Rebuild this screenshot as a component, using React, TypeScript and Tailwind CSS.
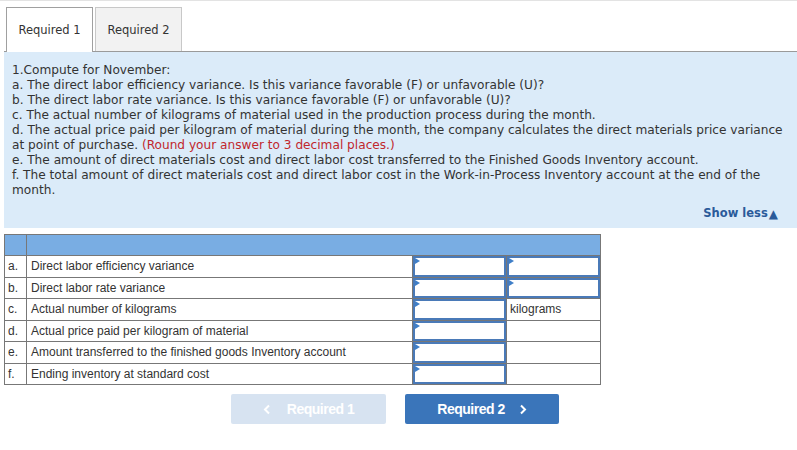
import React from "react";

const rows = [
  { k: "a.", label: "Direct labor efficiency variance", unit: "input" },
  { k: "b.", label: "Direct labor rate variance", unit: "input" },
  { k: "c.", label: "Actual number of kilograms", unit: "kilograms" },
  { k: "d.", label: "Actual price paid per kilogram of material", unit: "" },
  { k: "e.", label: "Amount transferred to the finished goods Inventory account", unit: "" },
  { k: "f.", label: "Ending inventory at standard cost", unit: "" },
];

function InputCell() {
  return (
    <div className="relative h-full border-2 border-[#4a7ab8]">
      {/* little entry marker */}
      <span className="absolute left-0 top-0 w-0 h-0 border-y-[3px] border-y-transparent border-l-[5px] border-l-[#3f7fc8]" />
    </div>
  );
}

export default function App() {
  return (
    <div className="w-[797px] h-[450px] bg-white border-t border-[#e3e3e3] overflow-hidden font-['DejaVu_Sans',Verdana,sans-serif] text-[#333]">
      {/* Tabs */}
      <div className="pl-[4px] pt-[6px]">
        <div className="flex gap-[2px] pl-[2px] border-b border-[#9a9a9a]">
          <div className="w-[87px] h-[45px] -mb-px bg-white border border-b-0 border-[#a0a0a0] flex items-center justify-center pt-[2px] text-[11.5px] text-[#333]">
            Required 1
          </div>
          <div className="w-[87px] h-[44px] bg-[#f2f2f2] border border-b-0 border-[#c8c8c8] flex items-center justify-center pt-[2px] text-[11.5px] text-[#333]">
            Required 2
          </div>
        </div>

        {/* Question panel */}
        <div className="bg-[#dbebf9] h-[176px] pl-[8px] pr-[6px] pt-[11px] flex flex-col">
          <div className="text-[12.15px] leading-[15px] text-[#333]">
            <div>1.Compute for November:</div>
            <div>a. The direct labor efficiency variance. Is this variance favorable (F) or unfavorable (U)?</div>
            <div>b. The direct labor rate variance. Is this variance favorable (F) or unfavorable (U)?</div>
            <div>c. The actual number of kilograms of material used in the production process during the month.</div>
            <div>
              d. The actual price paid per kilogram of material during the month, the company calculates the direct materials price variance at point of purchase.{" "}
              <span className="text-[#c1272d]">(Round your answer to 3 decimal places.)</span>
            </div>
            <div>e. The amount of direct materials cost and direct labor cost transferred to the Finished Goods Inventory account.</div>
            <div>f. The total amount of direct materials cost and direct labor cost in the Work-in-Process Inventory account at the end of the month.</div>
          </div>
          <div className="flex justify-end pr-[13px] mt-[7px]">
            <span className="text-[11.5px] font-bold text-[#2a5a9a] flex items-center gap-[1px]">
              Show less
              <span className="text-[12px] leading-none">▲</span>
            </span>
          </div>
        </div>
      </div>

      {/* Answer table */}
      <table className="ml-[4px] mt-[6px] w-[597px] border-collapse font-['Liberation_Sans',Arial,sans-serif] text-[12px] text-[#333]">
        <colgroup>
          <col className="w-[22px]" />
          <col className="w-[386px]" />
          <col className="w-[94px]" />
          <col className="w-[94px]" />
        </colgroup>
        <thead>
          <tr className="h-[21px] bg-[#79ade3]">
            <th className="border border-[#777]" />
            <th className="border border-[#777]" colSpan={3} />
          </tr>
        </thead>
        <tbody>
          {rows.map((r, i) => {
            const h = i % 2 === 0 ? "h-[21px] leading-[21px]" : "h-[20px] leading-[20px]";
            return (
              <tr key={r.k}>
                <td className={"border border-[#777] pl-[3px] p-0 align-middle " + h}>{r.k}</td>
                <td className={"border border-[#777] pl-[4px] p-0 align-middle " + h}>{r.label}</td>
                <td className="border border-[#777] p-0 align-top">
                  <div className={h}>
                    <InputCell />
                  </div>
                </td>
                {r.unit === "input" ? (
                  <td className="border border-[#777] p-0 align-top">
                    <div className={h}>
                      <InputCell />
                    </div>
                  </td>
                ) : (
                  <td className={"border border-[#777] pl-[3px] p-0 align-middle " + h}>{r.unit}</td>
                )}
              </tr>
            );
          })}
        </tbody>
      </table>

      {/* Navigation buttons */}
      <div className="flex justify-center gap-[19px] mt-[9px] pr-[7px] font-['Liberation_Sans',Arial,sans-serif]">
        <button className="w-[155px] h-[30px] rounded-[2px] bg-[#d7e3f1] text-white text-[14px] font-bold tracking-[-0.5px] flex items-center justify-center gap-[16px]">
          <svg width="8" height="11" viewBox="0 0 8 11" fill="none" stroke="currentColor" strokeWidth="2">
            <path d="M6 1.5 L2 5.5 L6 9.5" />
          </svg>
          Required 1
        </button>
        <button className="w-[154px] h-[30px] rounded-[2px] bg-[#3a75ba] text-white text-[14px] font-bold tracking-[-0.5px] flex items-center justify-center gap-[14px]">
          Required 2
          <svg width="8" height="11" viewBox="0 0 8 11" fill="none" stroke="currentColor" strokeWidth="2">
            <path d="M2 1.5 L6 5.5 L2 9.5" />
          </svg>
        </button>
      </div>
    </div>
  );
}
